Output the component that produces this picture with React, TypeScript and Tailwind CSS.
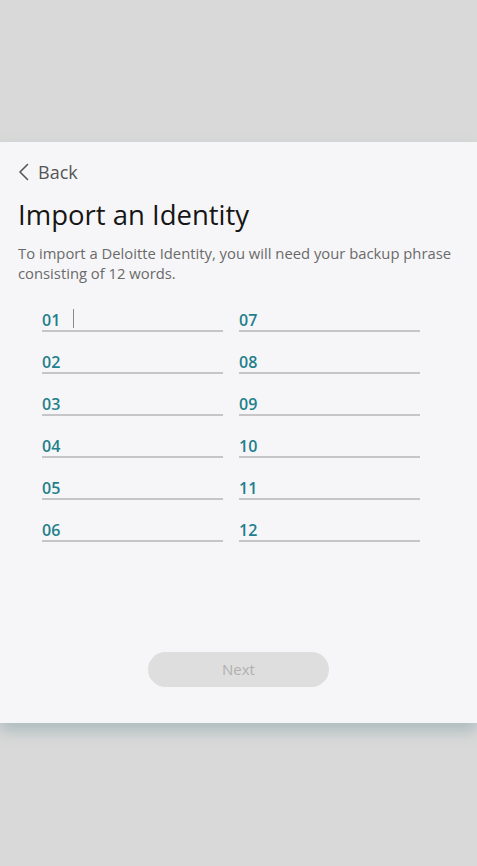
const words = ['01', '02', '03', '04', '05', '06', '07', '08', '09', '10', '11', '12']

function WordField({ label, active }: { label: string; active?: boolean }) {
  return (
    <div className="flex h-[24px] items-end border-b-2 border-[#c6c6c8]">
      <span className="mb-[-1px] text-[16px] leading-[22px] font-semibold text-[#1f7f8c]">{label}</span>
      {active && <span className="ml-[13px] mb-[2px] h-[19px] w-px bg-[#8a8a8a]" />}
    </div>
  )
}

export default function App() {
  const left = words.slice(0, 6)
  const right = words.slice(6)
  return (
    <div className="min-h-[866px] bg-[#d9d9d9] pt-[142px] font-['Open_Sans',sans-serif]">
      <div className="h-[581px] bg-[#f6f6f8] px-[18px] pt-[18px] shadow-[0_8px_14px_rgba(120,150,160,0.45)]">
        {/* Back link */}
        <button className="flex items-center gap-[9px] text-[#555]">
          <svg width="11" height="18" viewBox="0 0 11 18" fill="none">
            <path d="M9.5 1.5L2 9l7.5 7.5" stroke="#555" strokeWidth="1.6" strokeLinecap="round" strokeLinejoin="round" />
          </svg>
          <span className="text-[18px] leading-[24px]">Back</span>
        </button>

        <h1 className="mt-[13px] text-[27.5px] leading-[36px] text-[#161616]">Import an Identity</h1>
        <p className="mt-[10px] text-[14.8px] leading-[20px] text-[#6a6a6a]">
          To import a Deloitte Identity, you will need your backup phrase consisting of 12 words.
        </p>

        {/* Phrase inputs */}
        <div className="mt-[25px] grid grid-cols-[181px_181px] gap-x-[16px] pl-[24px]">
          <div className="flex flex-col gap-[18px]">
            {left.map((w, i) => (
              <WordField key={w} label={w} active={i === 0} />
            ))}
          </div>
          <div className="flex flex-col gap-[18px]">
            {right.map((w) => (
              <WordField key={w} label={w} />
            ))}
          </div>
        </div>

        <div className="mt-[110px] flex justify-center">
          <button
            disabled
            className="h-[35px] w-[181px] rounded-full bg-[#dedede] text-[15px] text-[#b0b0b0]"
          >
            Next
          </button>
        </div>
      </div>
    </div>
  )
}
